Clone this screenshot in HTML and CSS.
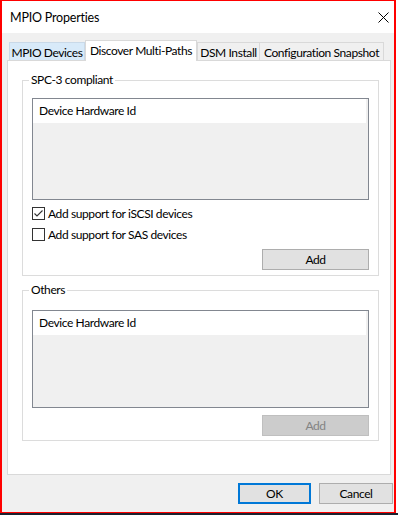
FILE: index.html
```html
<!DOCTYPE html>
<html lang="en">
<head>
    <meta charset="UTF-8">
    <title>MPIO Properties</title>
    <link rel="stylesheet" href="styles.css">
</head>
<body>
    <div class="window">
        <!-- title bar -->
        <div class="titlebar">
            <span class="title">MPIO Properties</span>
            <svg class="close" width="11" height="11" viewBox="0 0 11 11">
                <path d="M0.5 0.5 L10.5 10.5 M10.5 0.5 L0.5 10.5" stroke="#000" stroke-width="1" fill="none"/>
            </svg>
        </div>

        <div class="client">
            <!-- tabs -->
            <div class="tabs">
                <div class="tab tab-hover">MPIO Devices</div>
                <div class="tab tab-active">Discover Multi-Paths</div>
                <div class="tab tab-dsm">DSM Install</div>
                <div class="tab tab-snapshot">Configuration Snapshot</div>
            </div>

            <div class="tab-panel">
                <fieldset class="group group-spc">
                    <legend>SPC-3 compliant</legend>
                    <div class="listbox listbox-spc">
                        <div class="list-header">Device Hardware Id</div>
                    </div>
                    <label class="check first">
                        <span class="box">
                            <svg width="11" height="11" viewBox="0 0 11 11">
                                <path d="M1.5 5.5 L4 8 L9.5 2.5" stroke="#333" stroke-width="1.1" fill="none"/>
                            </svg>
                        </span>
                        Add support for iSCSI devices
                    </label>
                    <label class="check">
                        <span class="box"></span>
                        Add support for SAS devices
                    </label>
                    <div class="btn-row">
                        <button class="btn btn-add">Add</button>
                    </div>
                </fieldset>

                <fieldset class="group group-others">
                    <legend>Others</legend>
                    <div class="listbox listbox-others">
                        <div class="list-header">Device Hardware Id</div>
                    </div>
                    <div class="btn-row">
                        <button class="btn btn-add" disabled>Add</button>
                    </div>
                </fieldset>
            </div>

            <div class="footer">
                <button class="btn btn-default">OK</button>
                <button class="btn btn-cancel">Cancel</button>
            </div>
        </div>
    </div>
    <div class="taskbar"></div>
</body>
</html>
```

FILE: styles.css
```css
body {
    margin: 0;
    width: 398px;
    background: #ffffff;
    font-family: Lato, "Liberation Sans", sans-serif;
    font-size: 12px;
    letter-spacing: -0.4px;
    color: #000000;
}

.window {
    width: 396px;
    height: 513px;
    box-sizing: border-box;
    border: 2px solid #ff0000;
    border-top-width: 1px;
    border-bottom-width: 1px;
    display: flex;
    flex-direction: column;
}

/* 标题栏 */
.titlebar {
    height: 32px;
    flex: none;
    background: #ffffff;
    display: flex;
    align-items: center;
    justify-content: space-between;
    padding: 0 5px 0 8px;
}

.title {
    font-size: 12.5px;
    letter-spacing: -0.2px;
}

.close {
    display: block;
}

.client {
    flex: 1;
    background: #f0f0f0;
    padding: 7px 0 0 5px;
}

/* 选项卡 */
.tabs {
    display: flex;
    align-items: flex-end;
    height: 21px;
    padding-left: 2px;
    margin-bottom: -1px;
}

.tab {
    height: 18px;
    box-sizing: border-box;
    margin-bottom: 1px;
    border: 1px solid #d9d9d9;
    border-bottom: none;
    background: #f0f0f0;
    display: flex;
    align-items: center;
    justify-content: center;
    padding-top: 1px;
    white-space: nowrap;
}

.tab-hover {
    width: 76px;
    background: #d8eaf9;
    border-color: #c9d9e8;
}

.tab-active {
    width: 112px;
    height: 21px;
    margin-bottom: 0;
    background: #ffffff;
    padding-top: 0;
    padding-bottom: 2px;
    position: relative;
    z-index: 1;
}

.tab-dsm {
    width: 63px;
}

.tab-snapshot {
    width: 125px;
    margin-left: -1px;
}

.tab-panel {
    width: 384px;
    height: 415px;
    box-sizing: border-box;
    background: #ffffff;
    border: 1px solid #d9d9d9;
    padding: 11px 0 0 14px;
}

/* 分组框 */
.group {
    width: 357px;
    box-sizing: border-box;
    margin: 0;
    padding: 0 9px 5px;
    border: 1px solid #dcdcdc;
    min-inline-size: 0;
}

.group legend {
    line-height: 16px;
    padding: 0 2px;
    margin-left: -3px;
}

.group-others {
    margin-top: 6px;
    padding-bottom: 4px;
}

.listbox {
    box-sizing: border-box;
    border: 1px solid #828790;
    background: #f0f0f0;
}

.listbox-spc {
    height: 102px;
    margin-top: 10px;
}

.listbox-others {
    height: 98px;
    margin-top: 12px;
}

.list-header {
    height: 24px;
    margin-right: 2px;
    background: #ffffff;
    padding-left: 6px;
    line-height: 24px;
}

/* 复选框 */
.check {
    display: flex;
    align-items: center;
    height: 21px;
}

.check.first {
    margin-top: 3px;
}

.box {
    width: 13px;
    height: 13px;
    box-sizing: border-box;
    border: 1px solid #333333;
    background: #ffffff;
    margin-right: 3px;
    flex: none;
}

.box svg {
    display: block;
}

/* 按钮 */
.btn-row {
    display: flex;
    justify-content: flex-end;
    margin-top: 4px;
}

.group-others .btn-row {
    margin-top: 7px;
}

.btn {
    width: 73px;
    height: 21px;
    box-sizing: border-box;
    background: #e1e1e1;
    border: 1px solid #adadad;
    font-family: inherit;
    font-size: 12px;
    letter-spacing: inherit;
    color: #000000;
    padding: 0;
}

.btn-add {
    width: 107px;
}

.btn-cancel {
    width: 74px;
}

.btn:disabled {
    background: #cccccc;
    border-color: #bfbfbf;
    color: #838383;
}

.btn-default {
    border: 2px solid #0078d7;
}

.footer {
    display: flex;
    justify-content: flex-end;
    gap: 8px;
    margin-top: 8px;
    padding-right: 1px;
}

.taskbar {
    height: 2px;
    background: #1c2230;
}
```
